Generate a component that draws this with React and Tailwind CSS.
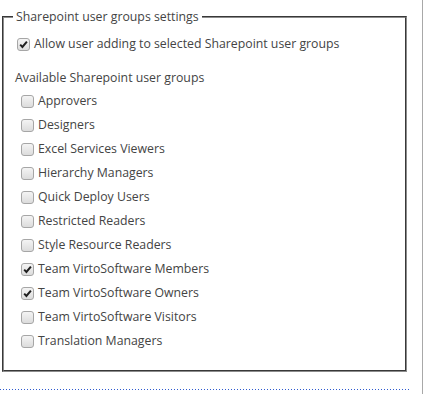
import React from "react";

const groups = [
    { name: "Approvers", checked: false },
    { name: "Designers", checked: false },
    { name: "Excel Services Viewers", checked: false },
    { name: "Hierarchy Managers", checked: false },
    { name: "Quick Deploy Users", checked: false },
    { name: "Restricted Readers", checked: false },
    { name: "Style Resource Readers", checked: false },
    { name: "Team VirtoSoftware Members", checked: true },
    { name: "Team VirtoSoftware Owners", checked: true },
    { name: "Team VirtoSoftware Visitors", checked: false },
    { name: "Translation Managers", checked: false },
];

const Checkbox = ({ checked }) => (
    <span className="flex h-[13px] w-[13px] shrink-0 items-center justify-center rounded-[3px] border border-[#a6a6a6] bg-gradient-to-b from-[#f4f4f4] to-[#dcdcdc]">
        {checked && (
            <svg width="11" height="11" viewBox="0 0 11 11">
                <path d="M2.2 5.6 L4.4 7.9 L8.9 2.6" fill="none" stroke="#1e1e1e" strokeWidth="2" />
            </svg>
        )}
    </span>
);

export default function App() {
    return (
        <div className="flex h-[394px] w-[424px] bg-white font-['Open_Sans',sans-serif] text-[12.3px] text-[#444]">
            <div className="w-[422px]">
                <fieldset className="ml-[2px] mt-[8px] h-[364px] w-[405px] border-2 border-[#8c8c8c] [border-style:groove]">
                    <legend className="ml-[9px] px-[3px] leading-[18px]">Sharepoint user groups settings</legend>
                    <label className="ml-[13px] mt-[6px] flex h-[24px] items-center gap-[4px]">
                        <Checkbox checked />
                        <span>Allow user adding to selected Sharepoint user groups</span>
                    </label>
                    <div className="ml-[11px] mt-[13px] leading-[18px]">Available Sharepoint user groups</div>
                    <ul className="mt-[2px]">
                        {groups.map((g, idx) => (
                            <li key={idx} className="ml-[17px] flex h-[24px] items-center gap-[4px]">
                                <Checkbox checked={g.checked} />
                                <span>{g.name}</span>
                            </li>
                        ))}
                    </ul>
                </fieldset>
                <div className="mt-[17px] h-px w-[410px] bg-[linear-gradient(to_right,#2f5bd0_1px,transparent_1px)] bg-[length:3px_1px]" />
            </div>
            <div className="h-full w-px bg-[#a8a8a8]" />
        </div>
    );
}
